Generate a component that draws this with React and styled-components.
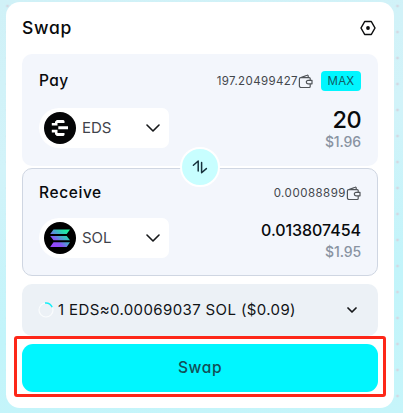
import React from "react";
import styled, { createGlobalStyle } from "styled-components";

const GlobalStyle = createGlobalStyle`
  * { box-sizing: border-box; }
  body { margin: 0; overflow: hidden; }
`;

const Page = styled.main`
  width: 403px;
  height: 413px;
  padding: 2px 9px 5px 6px;
  font-family: Inter, "Open Sans", sans-serif;
  font-feature-settings: "cv11" 1;
  background:
    radial-gradient(circle at 50% 50%, #d3d8e2 1px, transparent 1.8px) 384.5px 19px / 26px 26px,
    linear-gradient(170deg, #d0f1f7 0%, #d2f3f9 35%, #c2f4fa 70%, #c6f5fa 100%);
`;

const Card = styled.section`
  position: relative;
  height: 406px;
  padding: 0 16px;
  border-radius: 14px;
  background: #fff;
`;

const Row = styled.div`
  display: flex;
  align-items: center;
  justify-content: space-between;
  height: ${(p) => p.$h}px;
`;

const Header = styled(Row)`
  padding-right: 2px;
`;

const Label = styled.span`
  display: block;
  white-space: nowrap;
  font-size: ${(p) => p.$size}px;
  font-weight: ${(p) => p.$weight || 500};
  line-height: ${(p) => p.$line || 20}px;
  letter-spacing: ${(p) => p.$track || 0}px;
  color: ${(p) => p.$color || "#080a0c"};
`;

const Panels = styled.div`
  position: relative;
  display: grid;
  grid-template-rows: 112px 108px;
  row-gap: 2px;
`;

const Panel = styled.div`
  padding: ${(p) => (p.$outlined ? "13px 16px 0" : "16px 17px 0")};
  border: ${(p) => (p.$outlined ? "1px solid #cfd6e2" : "0")};
  border-radius: 10px;
  background: #f3f6fc;
`;

const Balance = styled.div`
  display: flex;
  align-items: center;
`;

const MaxButton = styled.button`
  width: 40px;
  height: 20px;
  margin-left: 8px;
  padding: 0;
  border: 0;
  border-radius: 4px;
  background: #00f6ff;
  color: #125c64;
  font: 400 11.5px/20px Inter, sans-serif;
  letter-spacing: 0.2px;
`;

const Body = styled(Row)`
  align-items: flex-start;
  margin-top: ${(p) => p.$top}px;
`;

const TokenSelect = styled.div`
  display: flex;
  align-items: center;
  width: 130px;
  height: 40px;
  padding: 0 9px 0 5px;
  border-radius: 20px 7px 7px 20px;
  background: #fff;
`;

const TokenName = styled(Label)`
  flex: 1;
  margin-left: 6px;
`;

const Amounts = styled.div`
  display: flex;
  flex-direction: column;
  align-items: flex-end;
`;

const SwitchButton = styled.button`
  position: absolute;
  left: 158px;
  top: 93px;
  display: grid;
  place-items: center;
  width: 40px;
  height: 40px;
  padding: 0;
  border: 2px solid #fff;
  border-radius: 50%;
  background: #c8feff;
`;

const Rate = styled.div`
  display: flex;
  align-items: center;
  height: 52px;
  margin-top: 8px;
  padding: 0 21px 0 16px;
  border-radius: 10px;
  background: #ecf1f6;
`;

const RateText = styled(Label)`
  flex: 1;
  margin-left: 4px;
`;

const SwapButton = styled.button`
  display: block;
  width: 100%;
  height: 48px;
  margin-top: 8px;
  padding: 0;
  border: 0;
  border-radius: 11px;
  background: #00f6ff;
  color: #124f56;
  font: 500 15.5px/48px Inter, sans-serif;
  font-feature-settings: "cv11" 1;
  letter-spacing: 0.6px;
`;

const Highlight = styled.div`
  position: absolute;
  left: 8px;
  top: 334px;
  width: 372px;
  height: 61px;
  border: 3px solid #fd2718;
  border-radius: 3px;
  pointer-events: none;
`;

const Icon = styled.svg`
  display: block;
  flex: none;
  fill: none;
`;

const HexIcon = () => (
  <Icon width="16" height="16" viewBox="0 0 16 16">
    <path d="M4.7 1.5h6.6L15 8l-3.7 6.5H4.7L1 8Z" stroke="#0b0c0d" strokeWidth="1.5" strokeLinejoin="round" />
    <circle cx="8" cy="8" r="1.9" fill="#0b0c0d" />
  </Icon>
);

const WalletIcon = () => (
  <Icon width="15" height="15" viewBox="0 0 15 15" stroke="#505458" strokeWidth="1.2" strokeLinejoin="round" strokeLinecap="round">
    <path d="M12.2 6V4.6a1 1 0 0 0-1-1H2.7a1.3 1.3 0 0 0-1.3 1.3v7a1.6 1.6 0 0 0 1.6 1.6h8.2a1 1 0 0 0 1-1v-2.2" />
    <path d="m3.5 3.4 5.6-2.2a.8.8 0 0 1 1.1.6v1.7" />
    <path d="M10 6.4h4v3.4h-4a1.7 1.7 0 0 1 0-3.4Z" />
  </Icon>
);

const Chevron = ({ w = 14, h = 8, stroke = 1.6 }) => (
  <Icon width={w} height={h} viewBox={`0 0 ${w} ${h}`}>
    <path d={`M1 1 ${w / 2} ${h - 1} ${w - 1} 1`} stroke="#16181a" strokeWidth={stroke} strokeLinecap="round" strokeLinejoin="round" />
  </Icon>
);

const EdsLogo = () => (
  <Icon width="32" height="32" viewBox="0 0 32 32">
    <circle cx="16" cy="16" r="16" fill="#050607" />
    <path d="M12.8 8h6.7l1 1v2h-7v2.6H11V9.8Z M7.8 11h3.4v2.6H7.8Z M7.8 17.8h3.4v2.6H7.8Z M14.3 14.3H24v3h-9.7Z M11 17.8h2.5V21h7v2l-1 1h-6.7L11 22.2Z" fill="#fff" />
  </Icon>
);

const SolLogo = () => (
  <Icon width="32" height="32" viewBox="0 0 32 32">
    <defs>
      <linearGradient id="sol" x1="8" y1="25" x2="24" y2="7" gradientUnits="userSpaceOnUse">
        <stop offset="0.05" stopColor="#9945ff" />
        <stop offset="0.3" stopColor="#8752f3" />
        <stop offset="0.5" stopColor="#5497d5" />
        <stop offset="0.75" stopColor="#28d3b0" />
        <stop offset="1" stopColor="#19fb9b" />
      </linearGradient>
    </defs>
    <circle cx="16" cy="16" r="16" fill="#000" />
    <path d="M9.5 7.5H26L22.7 12H6.2Z M6.2 14h16.5l3.3 4.2H9.5Z M9.5 20.3H26L22.7 25H6.2Z" fill="url(#sol)" />
  </Icon>
);

const SwitchIcon = () => (
  <Icon width="16" height="16" viewBox="0 0 16 16" stroke="#17313c" strokeWidth="1.5" strokeLinecap="round" strokeLinejoin="round">
    <path d="M1.4 6.2 6.2 2v10" />
    <path d="M9.6 3.6v10.2l4.8-4.2" />
  </Icon>
);

const Spinner = () => (
  <Icon width="16" height="16" viewBox="0 0 16 16">
    <circle cx="8" cy="8" r="7" stroke="#fafcfd" strokeWidth="1.2" />
    <path d="M7 1a7 7 0 0 1 7.2 4.2" stroke="#16eef7" strokeWidth="1.5" />
  </Icon>
);

export default function App() {
  return (
    <>
      <GlobalStyle />
      <Page>
        <Card>
          <Header $h={52}>
            <Label $size={17.5} $track={0.75}>Swap</Label>
            <HexIcon />
          </Header>
          <Panels>
            <Panel>
              <Row $h={22}>
                <Label $size={15.5} $track={0.4}>Pay</Label>
                <Balance>
                  <Label $size={11.5} $weight={400} $track={0.37} $color="#43474c">197.20499427</Label>
                  <WalletIcon />
                  <MaxButton>MAX</MaxButton>
                </Balance>
              </Row>
              <Body $h={58} $top={16}>
                <TokenSelect>
                  <EdsLogo />
                  <TokenName $size={15} $weight={400} $color="#3f434b">EDS</TokenName>
                  <Chevron />
                </TokenSelect>
                <Amounts>
                  <Label $size={23.5} $line={24} $track={-0.6}>20</Label>
                  <Label $size={14} $track={-0.1} $color="#8993a2">$1.96</Label>
                </Amounts>
              </Body>
            </Panel>
            <Panel $outlined>
              <Row $h={22}>
                <Label $size={15.5} $track={0.6}>Receive</Label>
                <Balance>
                  <Label $size={11.5} $weight={400} $track={0.5} $color="#43474c">0.00088899</Label>
                  <WalletIcon />
                </Balance>
              </Row>
              <Body $h={58} $top={14}>
                <TokenSelect>
                  <SolLogo />
                  <TokenName $size={15} $weight={400} $color="#3f434b">SOL</TokenName>
                  <Chevron />
                </TokenSelect>
                <Amounts>
                  <Label $size={16} $line={24} $track={-0.05}>0.013807454</Label>
                  <Label $size={14} $track={-0.1} $color="#8993a2">$1.95</Label>
                </Amounts>
              </Body>
            </Panel>
            <SwitchButton aria-label="Switch tokens"><SwitchIcon /></SwitchButton>
          </Panels>
          <Rate>
            <Spinner />
            <RateText $size={15} $weight={400} $track={0.38} $color="#111416">1 EDS≈0.00069037 SOL ($0.09)</RateText>
            <Chevron w={10} h={6} stroke={1.7} />
          </Rate>
          <SwapButton>Swap</SwapButton>
          <Highlight />
        </Card>
      </Page>
    </>
  );
}
